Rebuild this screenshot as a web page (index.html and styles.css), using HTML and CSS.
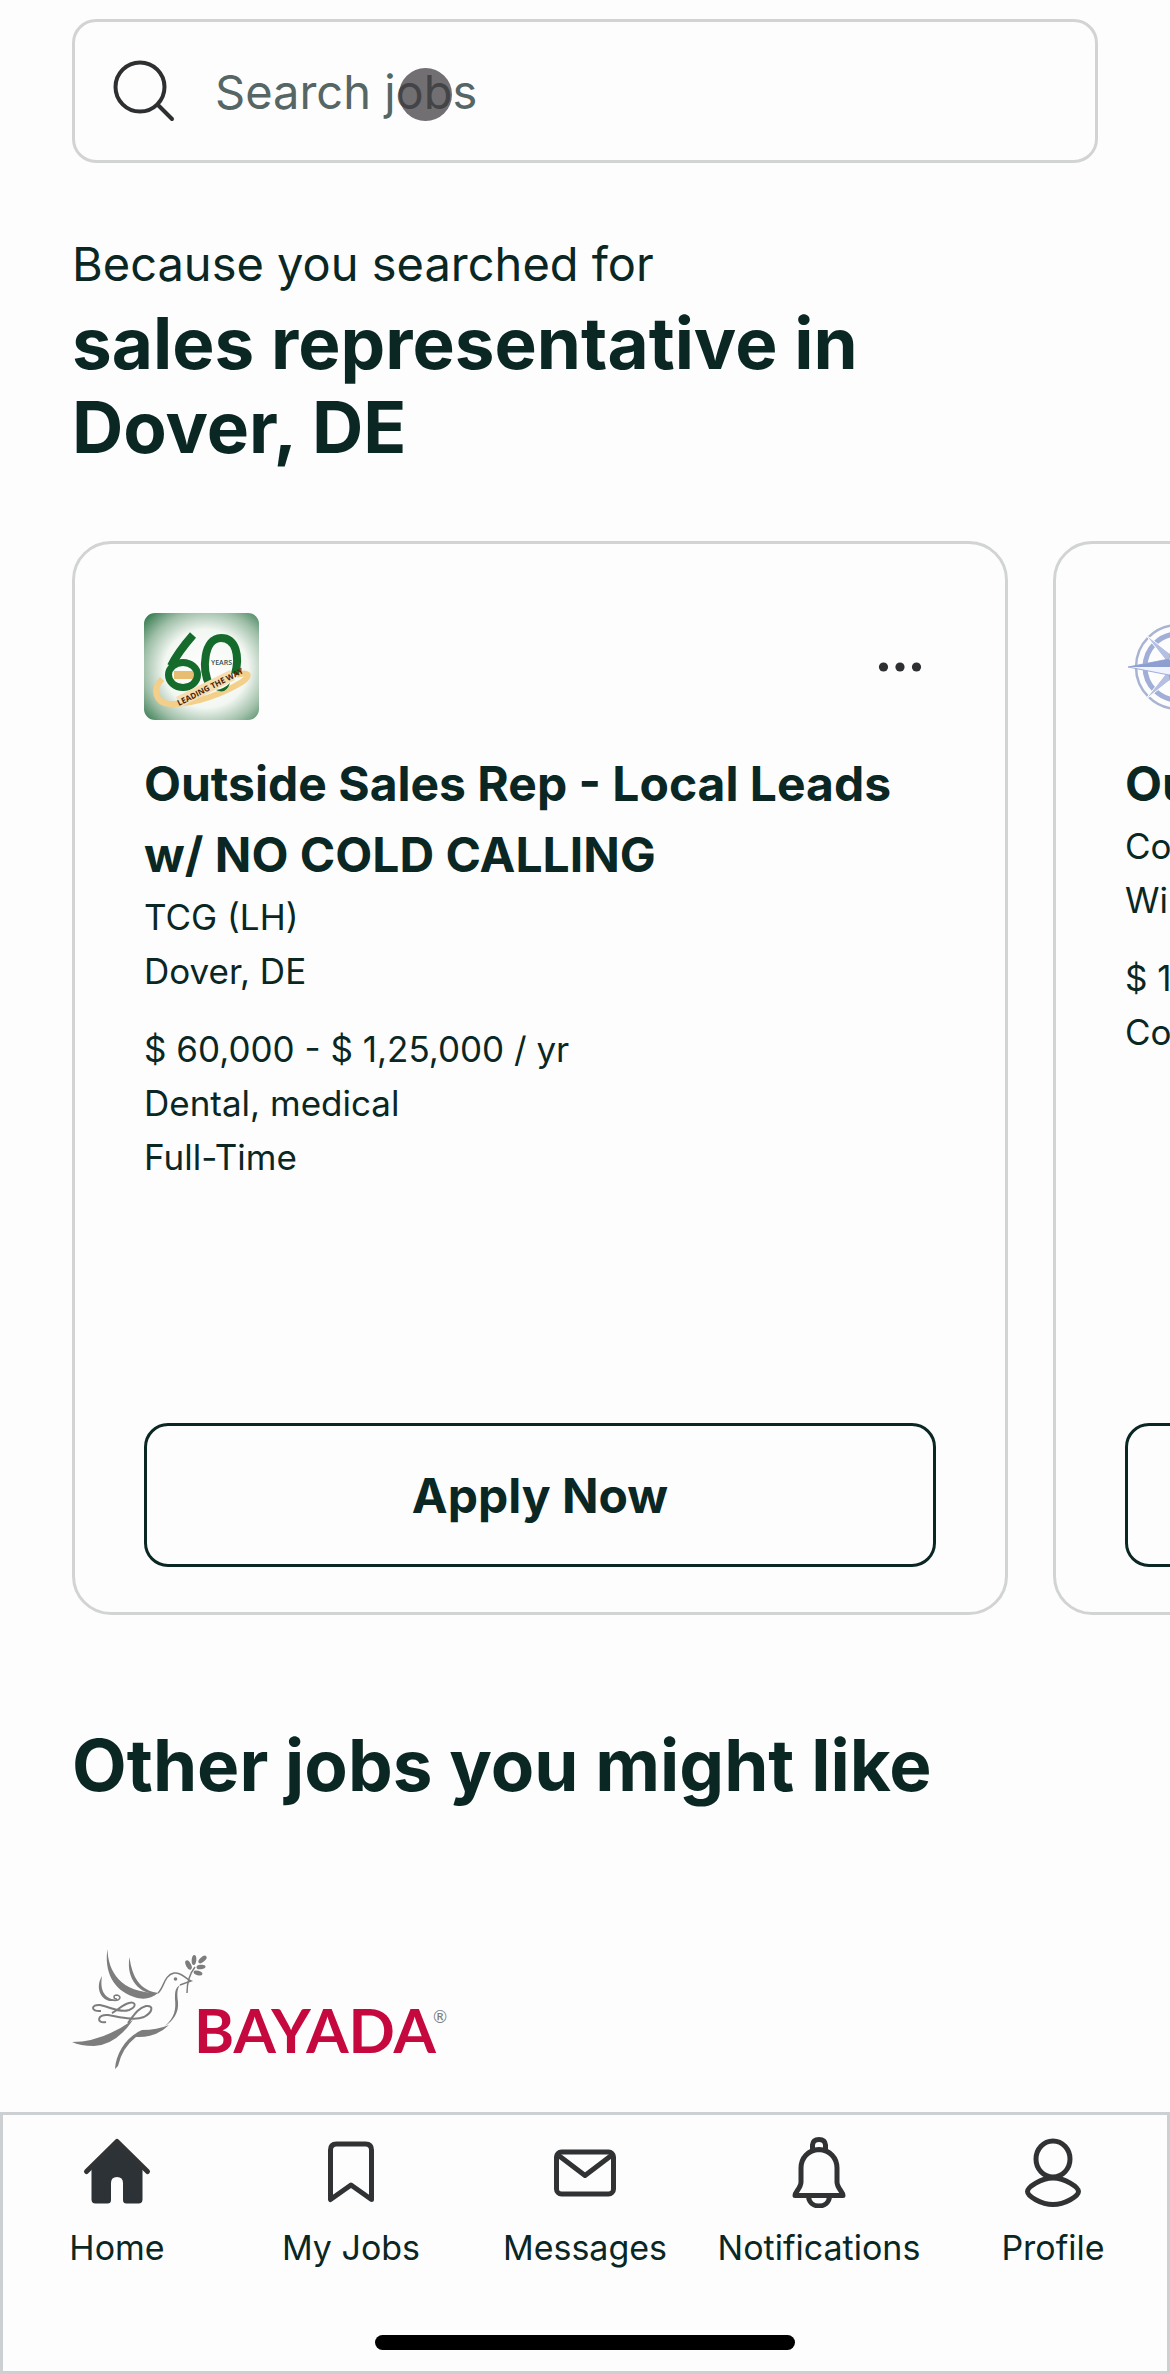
FILE: index.html
```html
<!DOCTYPE html>
<html lang="en">
<head>
  <meta charset="UTF-8">
  <meta name="viewport" content="width=device-width, initial-scale=1.0">
  <title>Jobs</title>
  <link rel="stylesheet" href="styles.css">
</head>
<body>
  <main class="page">
    <form class="search" role="search">
      <label for="search">
        <svg class="search-icon" viewBox="0 0 64 64" role="img" aria-label="Search jobs">
          <circle cx="29" cy="28" r="24.5"/>
          <path d="M47 46l14 14"/>
        </svg>
      </label>
      <input type="text" id="search" placeholder="Search jobs">
      <span class="touch"></span>
    </form>

    <section class="because">
      <p class="lead">Because you searched for</p>
      <h2>sales representative in Dover, DE</h2>
    </section>

    <section class="cards">
      <article class="card">
        <div class="card-top">
          <svg class="logo" viewBox="0 0 115 107" role="img" aria-label="60 years, leading the way">
            <defs>
              <radialGradient id="glow" cx="54%" cy="52%" r="70%">
                <stop offset="0" stop-color="#fff"/>
                <stop offset="0.52" stop-color="#f3f7f2"/>
                <stop offset="0.78" stop-color="#9fbfa8"/>
                <stop offset="1" stop-color="#3f8058"/>
              </radialGradient>
            </defs>
            <rect width="115" height="107" rx="11" fill="url(#glow)"/>
            <path d="M18 66C8 76 11 90 26 91C50 92 80 80 98 69C108 62 104 58 92 62" fill="none" stroke="#f3cf8a" stroke-width="6"/>
            <path d="M30 58h20v8H30z" fill="#e8bd72"/>
            <path d="M49 22C42 30 32 43 27 53" fill="none" stroke="#146b2c" stroke-width="8"/>
            <ellipse cx="39" cy="62" rx="14.500" ry="12.500" fill="none" stroke="#146b2c" stroke-width="7"/>
            <path d="M66 73C57 56 60 25 77 25C92 25 96 43 91 61" fill="none" stroke="#146b2c" stroke-width="8"/>
            <path d="M32 84L86 57L91 67L37 94Z" fill="#f6deb0"/>
            <path d="M72 77Q80 76 86 70Q82 82 72 77Z" fill="#146b2c"/>
            <text x="67" y="52" class="logo-years">YEARS</text>
            <text x="35" y="93" class="logo-way" transform="rotate(-27 35 93)">LEADING THE WAY</text>
          </svg>
          <button class="more" type="button" aria-label="More options">
            <svg viewBox="0 0 44 12" aria-hidden="true">
              <circle cx="5.500" cy="6" r="4.600"/>
              <circle cx="22" cy="6" r="4.600"/>
              <circle cx="38.500" cy="6" r="4.600"/>
            </svg>
          </button>
        </div>
        <h3>Outside Sales Rep - Local Leads w/ NO COLD CALLING</h3>
        <p>TCG (LH)</p>
        <p>Dover, DE</p>
        <p class="pay">$ 60,000 - $ 1,25,000 / yr</p>
        <p>Dental, medical</p>
        <p>Full-Time</p>
        <button class="apply" type="button">Apply Now</button>
      </article>

      <article class="card">
        <div class="card-top">
          <svg class="logo" viewBox="-3 0 115 107" role="img" aria-label="Compass" fill="none" stroke="#a0aed8">
            <circle cx="50" cy="54" r="42" stroke="#a9b4d2" stroke-width="2.500"/>
            <circle cx="50" cy="54" r="33" stroke-width="5"/>
            <path d="M17 21L50 47L83 21L57 54L83 87L50 61L17 87L43 54Z" fill="#b4bfe2" stroke="#fff"/>
            <path d="M0 54L41 46L50 4L59 46L100 54L59 62L50 104L41 62Z" fill="#eef3ff"/>
            <path d="M0 54L50 54L41 46ZM50 4L50 54L59 46ZM100 54L50 54L59 62ZM50 104L50 54L41 62Z" fill="#8d9ed0" stroke="none"/>
          </svg>
          <button class="more" type="button" aria-label="More options"></button>
        </div>
        <h3>Ou</h3>
        <p>Co</p>
        <p>Wi</p>
        <p class="pay">$ 1</p>
        <p>Co</p>
        <button class="apply" type="button" aria-label="Apply"></button>
      </article>
    </section>

    <section class="other">
      <h2>Other jobs you might like</h2>
      <svg class="bayada" viewBox="0 0 400 160" role="img" aria-label="Bayada">
        <g fill="#7d7d7d">
          <path d="M47.500 20C48 42 60 64 98 64C91 70 83 71 74 68C53 61 44 42 47.500 20Z"/>
          <path d="M69.500 28C72 48 80 62 99 64C86 68 65 55 69.500 28Z"/>
          <path d="M42 47C40 60 43 69 56 71C45 76 33 62 42 47Z"/>
          <path d="M12 113Q42 113 73 91Q56 116 34 117Q20 117 12 113Z"/>
          <path d="M55 140C56 124 66 108 82 101Q97 101 109 96Q96 109 76 108Q62 119 58 137Z"/>
          <path d="M120 56C117 60 117 65 118 73C119 84 113 92 105 97C115 88 116 80 115 70C115 63 115 59 120 56Z"/>
          <circle cx="115.500" cy="50" r="1.800"/>
          <ellipse cx="128.500" cy="36" rx="5" ry="2.500" transform="rotate(62 128.500 36)"/>
          <ellipse cx="134" cy="31" rx="5" ry="2.300" transform="rotate(-85 134 31)"/>
          <ellipse cx="142.500" cy="30.500" rx="5" ry="2.500" transform="rotate(-42 142.500 30.500)"/>
          <ellipse cx="141" cy="38" rx="4.500" ry="2.200" transform="rotate(-5 141 38)"/>
          <ellipse cx="138" cy="44" rx="4.500" ry="2.200" transform="rotate(15 138 44)"/>
        </g>
        <g fill="none" stroke="#7d7d7d" stroke-width="1.500">
          <path d="M98 64C104 59 104 46 114 44C122 43 124 49 131 52L120 56"/>
          <path d="M135 38Q127 48 127 64"/>
          <path d="M51 71C61 73 62 67 57 66C53 66 53 70 57 70"/>
          <path d="M41 82C30 83 31 75 40 76C50 78 60 84 69 81C77 78 76 72 69 74C62 76 58 81 52 84" stroke-width="2"/>
          <path d="M46 93C36 95 37 85 48 86C60 88 74 92 84 88C93 83 94 76 86 77C78 79 74 86 68 94" stroke-width="2"/>
        </g>
        <text x="134" y="124" class="bayada-name">BAYADA</text>
        <text x="373" y="94" class="bayada-mark">®</text>
      </svg>
    </section>
  </main>

  <nav class="tabs">
    <div class="tab-row">
      <a href="#home" class="tab">
        <svg viewBox="0 0 72 72" aria-hidden="true">
          <path class="solid" d="M36 6L10.500 31V63.500Q10.500 67.500 14.500 67.500H26.500Q30 67.500 30 64V47Q30 41 36 41T42 47V64Q42 67.500 45.500 67.500H57.500Q61.500 67.500 61.500 63.500V31Z"/>
          <path d="M5.500 35.500L36 5.500L66.500 35.500" stroke-linecap="round"/>
        </svg>
        <span>Home</span>
      </a>
      <a href="#jobs" class="tab">
        <svg viewBox="0 0 72 72" aria-hidden="true">
          <path d="M15.500 63.500V14Q15.500 8 21.500 8H50.500Q56.500 8 56.500 14V63.500L36 49Z"/>
        </svg>
        <span>My Jobs</span>
      </a>
      <a href="#messages" class="tab">
        <svg viewBox="0 0 72 72" aria-hidden="true">
          <rect x="7.500" y="16" width="57" height="42" rx="5"/>
          <path d="M9 19L36 39.500L63 19"/>
        </svg>
        <span>Messages</span>
      </a>
      <a href="#notifications" class="tab">
        <svg viewBox="0 0 72 72" aria-hidden="true">
          <path d="M29.500 14.500V9Q30 3.500 36 3.500T42.500 9V14.500M36 13.500C25 14 18 22 18 32V46C18 52 12 56 12 59.500H60C60 56 54 52 54 46V32C54 22 47 14 36 13.500ZM25.500 61C27 73 45 73 46.500 61"/>
        </svg>
        <span>Notifications</span>
      </a>
      <a href="#profile" class="tab">
        <svg viewBox="0 0 72 72" aria-hidden="true">
          <ellipse cx="36" cy="23" rx="17" ry="18"/>
          <path d="M36 42C24 42 10.500 51 10.500 55.500S24 68.500 36 68.500S61.500 60 61.500 55.500S48 42 36 42Z"/>
        </svg>
        <span>Profile</span>
      </a>
    </div>
    <div class="home-bar"></div>
  </nav>
</body>
</html>
```
FILE: styles.css
```css
* {
  box-sizing: border-box;
}

body {
  font-family: Inter, "Liberation Sans", sans-serif;
  background: #fdfdfd;
  color: #0a2724;
  margin: 0;
  min-height: 100vh;
  display: flex;
  flex-direction: column;
}

h2, h3, p {
  margin: 0;
}

h2 {
  font-size: 71px;
  line-height: 84px;
  font-weight: 700;
}

.page {
  flex: 1;
  padding: 19px 0 0 72px;
  overflow: hidden;
}

.search {
  position: relative;
  display: flex;
  align-items: center;
  gap: 40px;
  height: 144px;
  margin-right: 72px;
  padding: 0 36px;
  border: 3px solid #d2d4d4;
  border-radius: 24px;
}

.search-icon {
  display: block;
  width: 64px;
  height: 64px;
  fill: none;
  stroke: #2d2f31;
  stroke-width: 4;
  stroke-linecap: round;
}

.search input {
  flex: 1;
  border: none;
  outline: none;
  padding: 0;
  background: none;
  font: inherit;
  font-size: 47px;
}

.search input::placeholder {
  color: #566664;
  opacity: 1;
}

/* touch point over the search text */
.touch {
  position: absolute;
  left: 324px;
  top: 46px;
  width: 53px;
  height: 53px;
  border-radius: 50%;
  background: rgba(60, 56, 60, 0.72);
}

.because {
  padding: 68px 72px 0 0;
}

.because h2 {
  max-width: 860px;
}

.lead {
  margin-bottom: 4px;
  font-size: 47px;
  line-height: 66px;
}

.cards {
  display: flex;
  gap: 45px;
  margin-top: 72px;
}

.card {
  display: flex;
  flex-direction: column;
  flex: none;
  width: 80vw;
  min-height: 1074px;
  padding: 69px 69px 45px;
  border: 3px solid #d2d4d4;
  border-radius: 39px;
}

.card-top {
  display: flex;
  justify-content: space-between;
  align-items: center;
  margin-bottom: 28px;
}

.logo {
  width: 115px;
  height: 107px;
}

.logo-years {
  font: 600 7px "Open Sans", sans-serif;
  fill: #33504a;
}

.logo-way {
  font: 700 8px "Open Sans", sans-serif;
  fill: #4a2408;
}

.more {
  width: 72px;
  height: 72px;
  padding: 0;
  border: none;
  background: none;
}

.more svg {
  display: block;
  width: 44px;
  height: 12px;
  margin: 0 auto;
  fill: #2d2f31;
}

.card h3 {
  font-size: 48px;
  line-height: 71px;
  font-weight: 700;
}

.card p {
  font-size: 35px;
  line-height: 54px;
}

.card .pay {
  margin-top: 24px;
}

.apply {
  width: 100%;
  height: 144px;
  margin-top: auto;
  border: 3px solid #0a2724;
  border-radius: 24px;
  background: none;
  color: #0a2724;
  font: inherit;
  font-size: 48px;
  font-weight: 700;
}

.other {
  padding-top: 108px;
}

.bayada {
  display: block;
  width: 400px;
  height: 160px;
  margin: 122px 0 0 -12px;
}

.bayada-name {
  font: 700 61px Lato, sans-serif;
  fill: #c5093f;
}

.bayada-mark {
  font: 400 17px Lato, sans-serif;
  fill: #7d7d7d;
}

.tabs {
  height: 262px;
  padding-top: 21px;
  border: 3px solid #cdd0d2;
  background: #fdfdfd;
  display: flex;
  flex-direction: column;
}

.tab-row {
  display: flex;
  margin: 0 -3px;
}

.tab {
  flex: 1;
  display: flex;
  flex-direction: column;
  align-items: center;
  gap: 16px;
  color: #0a2724;
  font-size: 34px;
  line-height: 48px;
  text-decoration: none;
}

.tab svg {
  width: 72px;
  height: 72px;
  fill: none;
  stroke: #303234;
  stroke-width: 5;
  stroke-linejoin: round;
}

.tab .solid {
  fill: #2d3236;
  stroke: none;
}

.home-bar {
  width: 36%;
  height: 15px;
  margin: auto auto 21px;
  border-radius: 8px;
  background: #000;
}
```
